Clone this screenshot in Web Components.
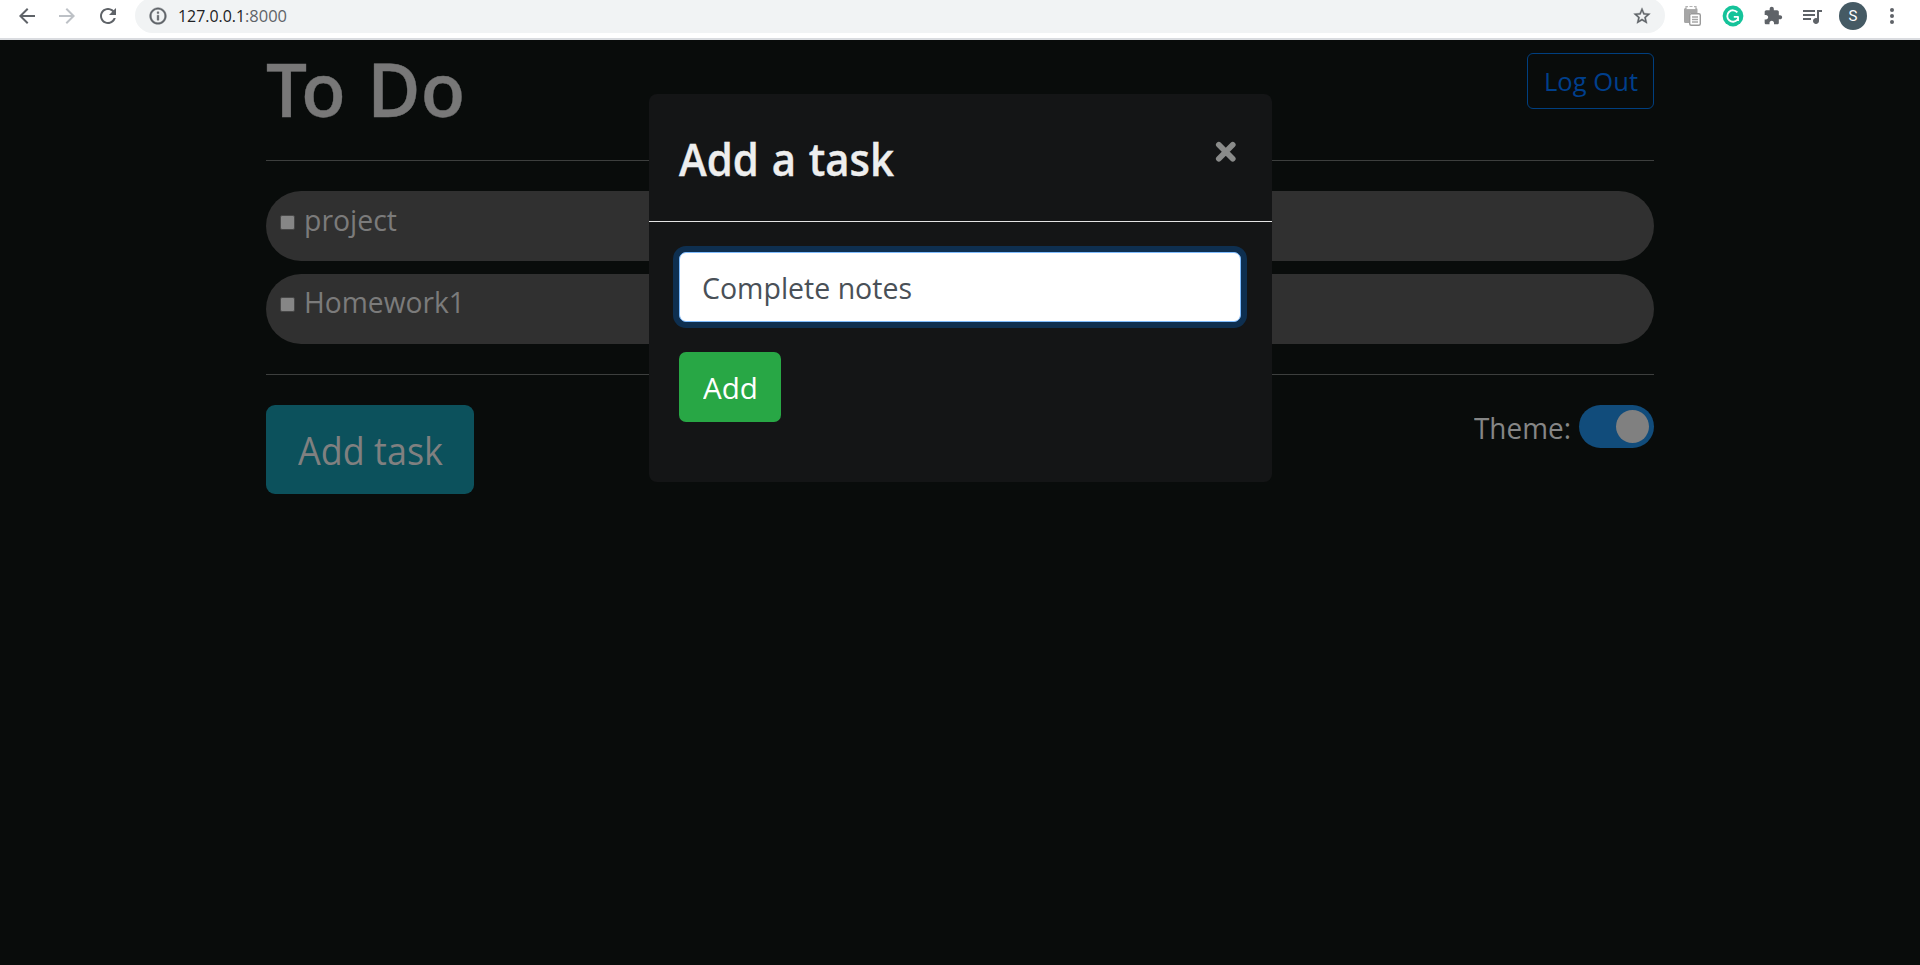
<!DOCTYPE html>
<html lang="en">
<head>
<meta charset="utf-8">
<title>To Do</title>
<style>
html,body{margin:0;height:100%;overflow:hidden;background:#090c0b}
body{font-family:"Open Sans","Noto Sans",sans-serif}
</style>
</head>
<body>
<todo-window></todo-window>
<script>
const define=(name,html,init)=>customElements.define(name,class extends HTMLElement{
  constructor(){super();this.attachShadow({mode:'open'}).innerHTML=html}
  connectedCallback(){if(init)init.call(this,this.shadowRoot)}
});

/* Text condensed or widened horizontally to a given width */
define('fit-text',`<style>
:host{display:inline-block;white-space:pre;flex:none}
span{display:inline-block;transform-origin:0 50%}
</style><span><slot></slot></span>`,function(r){
  const w=+this.getAttribute('w'),s=r.querySelector('span');
  this.style.width=w+'px';
  s.style.transform='scaleX('+w/s.getBoundingClientRect().width+')';
});

const icons={
 back:'<path d="M20 11H7.83l5.59-5.59L12 4l-8 8 8 8 1.41-1.41L7.83 13H20v-2z"/>',
 forward:'<path d="M12 4l-1.41 1.41L16.17 11H4v2h12.17l-5.58 5.59L12 20l8-8z"/>',
 reload:'<path d="M17.65 6.35C16.2 4.9 14.21 4 12 4c-4.42 0-7.99 3.58-7.99 8s3.57 8 7.99 8c3.73 0 6.84-2.55 7.73-6h-2.08c-.82 2.33-3.04 4-5.65 4-3.31 0-6-2.69-6-6s2.69-6 6-6c1.66 0 3.14.69 4.22 1.78L13 11h7V4l-2.35 2.35z"/>',
 info:'<path d="M11 7h2v2h-2zm0 4h2v6h-2zm1-9C6.48 2 2 6.48 2 12s4.48 10 10 10 10-4.48 10-10S17.52 2 12 2zm0 18c-4.41 0-8-3.59-8-8s3.59-8 8-8 8 3.59 8 8-3.59 8-8 8z" stroke="currentColor" stroke-width=".5"/>',
 star:'<path d="M22 9.24l-7.19-.62L12 2 9.19 8.63 2 9.24l5.46 4.73L5.82 21 12 17.27 18.18 21l-1.63-7.03L22 9.24zM12 15.4l-3.76 2.27 1-4.28-3.32-2.88 4.38-.38L12 6.1l1.71 4.04 4.38.38-3.32 2.88 1 4.28L12 15.4z" stroke="currentColor" stroke-width=".4"/>',
 puzzle:'<path d="M20.5 11H19V7c0-1.100-.9-2-2-2h-4V3.500C13 2.120 11.880 1 10.500 1S8 2.120 8 3.500V5H4c-1.100 0-1.990.9-1.990 2v3.800H3.500c1.490 0 2.700 1.210 2.700 2.700s-1.210 2.700-2.700 2.700H2V20c0 1.100.9 2 2 2h3.800v-1.500c0-1.490 1.210-2.700 2.700-2.700 1.490 0 2.700 1.210 2.700 2.700V22H17c1.100 0 2-.9 2-2v-4h1.500c1.380 0 2.500-1.120 2.500-2.500S21.880 11 20.500 11z"/>',
 music:'<path d="M15 6H3v2h12V6zm0 4H3v2h12v-2zM3 16h8v-2H3v2zM17 6v8.180c-.31-.11-.65-.18-1-.18-1.660 0-3 1.340-3 3s1.340 3 3 3 3-1.340 3-3V8h3V6h-5z"/>',
 dots:'<circle cx="12" cy="6" r="2"/><circle cx="12" cy="12" r="2"/><circle cx="12" cy="18" r="2"/>',
 clip:'<path fill="#a6a6a6" d="M5.500 4H16a1.500 1.500 0 0 1 1.500 1.500V9H10v10H5.500A1.500 1.500 0 0 1 4 17.500v-12A1.500 1.500 0 0 1 5.500 4z"/><path d="M6.500 4.300h9" stroke="#fff" stroke-width="1.600"/><path d="M6 4.500V2.700h2M14 2.700h2v1.800M9.500 2.500h3" fill="none" stroke="#b4b4b4" stroke-width="1.200"/><rect x="9.700" y="9.700" width="10.600" height="11.600" rx="1.500" fill="#fff" stroke="#9a9a9a" stroke-width="1.400"/><path d="M12 13h6M12 15.500h6M12 18h6" stroke="#a6a6a6" stroke-width="1.300"/>',
 grammar:'<circle cx="12" cy="12" r="10.400" fill="#15c39a"/><path d="M16.300 8.300A5.700 5.700 0 1 0 16.500 15.500M17.700 12.900H12.800M17 12.900V17" fill="none" stroke="#fff" stroke-width="1.900"/>',
 close:'<path d="M4 4L18.500 18.500M18.500 4L4 18.500" fill="none" stroke="currentColor" stroke-width="6" stroke-linecap="round"/>'
};
define('ui-icon',`<style>:host{display:block;flex:none}svg{display:block;fill:currentColor;overflow:visible}</style><svg viewBox="0 0 24 24"></svg>`,function(r){
  const s=r.querySelector('svg'),n=this.getAttribute('size')||24;
  s.setAttribute('width',n);s.setAttribute('height',n);s.innerHTML=icons[this.getAttribute('name')];
});

define('browser-bar',`<style>
:host{display:flex;box-sizing:border-box;height:40px;background:#fff;border-bottom:2px solid #dadce0;color:#5f6368;overflow:hidden;align-items:flex-start;padding-left:15px}
.nav{display:flex;gap:16px;padding-top:4px}
.nav>:nth-child(2){color:#bdc1c6}
.omni{display:flex;align-items:center;box-sizing:border-box;width:1530px;height:35px;margin:-2px 0 0 15px;padding:1px 13px 0 13px;border-radius:18px;background:#f1f3f4;font-size:16.500px}
.url{display:flex;margin-left:10px;flex:1;line-height:24px}
.host{color:#202124}
.tools{display:flex;align-items:center;height:32px}
.avatar{width:28px;height:28px;border-radius:50%;background:#455a64;color:#fff;font:15px/28px Roboto,sans-serif;text-align:center;margin:0 15px 0 15px}
</style>
<div class="nav"><ui-icon name="back"></ui-icon><ui-icon name="forward"></ui-icon><ui-icon name="reload" style="margin-left:1px"></ui-icon></div>
<div class="omni"><ui-icon name="info" size="20"></ui-icon><div class="url"><fit-text class="host" w="67">127.0.0.1</fit-text><fit-text w="42">:8000</fit-text></div><ui-icon name="star" size="20"></ui-icon></div>
<div class="tools"><ui-icon name="clip" style="margin-left:15px"></ui-icon><ui-icon name="grammar" style="margin-left:17px"></ui-icon><ui-icon name="puzzle" size="20" style="margin-left:18px"></ui-icon><ui-icon name="music" style="margin-left:17px"></ui-icon><div class="avatar">S</div><ui-icon name="dots" style="margin-left:-2px"></ui-icon></div>`);

define('task-item',`<style>
:host{display:flex;box-sizing:border-box;height:70px;border-radius:35px;background:#303030;padding:0 14px;color:#7b7b7b;font-size:29.400px;line-height:59px;align-items:flex-start}
i{width:13px;height:13px;border:1px solid #474747;border-radius:2px;background:#868686;margin:24px 9px 0 0}
:host([compact]){line-height:57px}:host([compact]) i{margin-top:23px}
</style><i></i><slot></slot>`);

define('toggle-switch',`<style>
:host{display:flex;box-sizing:border-box;width:75px;height:43px;border-radius:22px;background:#114c7b;padding:5px;justify-content:flex-end}
i{width:33px;height:33px;border-radius:50%;background:#808080}
</style><i></i>`);

define('ui-button',`<style>
:host{display:flex;box-sizing:border-box;align-items:center;justify-content:center;width:102px;height:70px;border-radius:7px;background:#28a745;color:#fff;font-size:29.400px;padding:2px 0 0 0}
:host([kind=outline]){width:127px;height:56px;background:none;border:1px solid #003f80;color:#003f8c;font-size:25.700px;border-radius:6px;padding:1px 0 0 0}
:host([kind=info]){width:208px;height:89px;background:#0c515c;color:#808080;font-size:37.500px;border-radius:9px;padding:1px 0 0}
</style><slot></slot>`);

define('todo-page',`<style>
:host{display:block;width:1388px;margin:0 auto;padding-top:13px}
header{display:flex;justify-content:space-between;height:107px;border-bottom:1px solid #3d3f3e}
h1{margin:0;font-size:74px;font-weight:600;line-height:71px;color:#787878;word-spacing:3px;-webkit-text-stroke:.4px #787878}
h1 span{letter-spacing:-6px}
main{display:flex;flex-direction:column;gap:13px;padding:30px 0;border-bottom:1px solid #3d3f3e}
footer{display:flex;justify-content:space-between;padding-top:30px}
.theme{display:flex;align-items:flex-start;font-size:29.400px;line-height:47px;color:#858686;gap:8px}
</style>
<header><h1><fit-text w="199"><span>T</span>o Do</fit-text></h1><ui-button kind="outline"><fit-text w="94">Log Out</fit-text></ui-button></header>
<main><task-item><fit-text w="93">project</fit-text></task-item><task-item compact><fit-text w="161">Homework1</fit-text></task-item></main>
<footer><ui-button kind="info"><fit-text w="145">Add task</fit-text></ui-button><div class="theme"><fit-text w="97">Theme:</fit-text><toggle-switch></toggle-switch></div></footer>`);

/* Dialog floating over the dimmed page */
define('task-modal',`<style>
:host{display:block;position:absolute;left:649px;top:94px;box-sizing:border-box;width:623px;height:388px;border-radius:8px;background:#141516;color:#eee}
header{display:flex;justify-content:space-between;box-sizing:border-box;height:128px;padding:35px 34px 0 30px;border-bottom:1px solid #e4e4e4}
h2{margin:0;font-size:44.400px;font-weight:600;line-height:61px;word-spacing:2px;-webkit-text-stroke:.4px #eee}
ui-icon{color:#8a8b8a;margin-top:12px}
section{display:flex;flex-direction:column;gap:30px;padding:30px 31px 30px 30px}
.input{display:flex;align-items:center;box-sizing:border-box;height:70px;border:1px solid #80bdff;border-radius:7px;background:#fff;box-shadow:0 0 0 6px #0e2f50;color:#495057;padding:2px 22px 0;font-size:29.400px}
</style>
<header><h2><fit-text w="215">Add a task</fit-text></h2><ui-icon name="close" size="23"></ui-icon></header>
<section><div class="input"><fit-text w="210">Complete notes</fit-text></div><ui-button><fit-text w="55">Add</fit-text></ui-button></section>`);

define('todo-window',`<style>:host{display:block;position:relative;width:1920px;height:965px;box-sizing:border-box;background:#090c0b}</style>
<browser-bar></browser-bar><todo-page></todo-page><task-modal></task-modal>`);
</script>
</body>
</html>
